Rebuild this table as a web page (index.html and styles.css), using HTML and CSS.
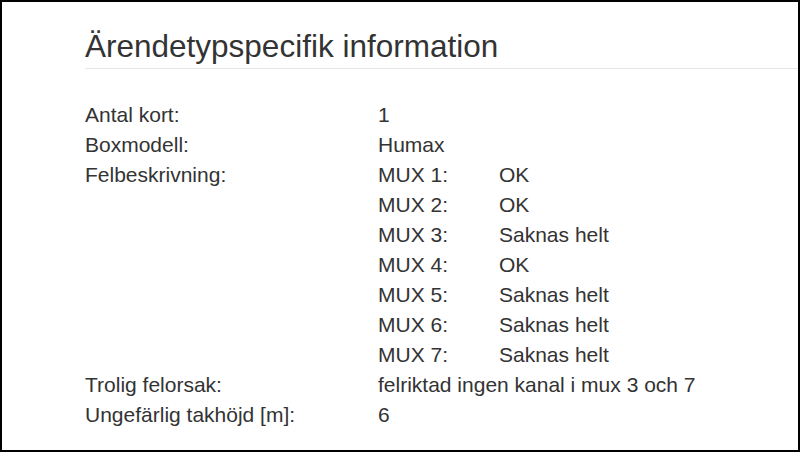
FILE: index.html
```html
<!DOCTYPE html>
<html lang="sv">
<head>
<meta charset="utf-8">
<link rel="stylesheet" href="styles.css">
</head>
<body>
<div class="frame">
  <div class="panel">
    <h3 class="title">Ärendetypspecifik information</h3>
    <dl class="info">
      <dt>Antal kort:</dt>
      <dd>1</dd>
      <dt>Boxmodell:</dt>
      <dd>Humax</dd>
      <dt>Felbeskrivning:</dt>
      <dd>
        <div class="mux">
          <span>MUX 1:</span><span>OK</span>
          <span>MUX 2:</span><span>OK</span>
          <span>MUX 3:</span><span>Saknas helt</span>
          <span>MUX 4:</span><span>OK</span>
          <span>MUX 5:</span><span>Saknas helt</span>
          <span>MUX 6:</span><span>Saknas helt</span>
          <span>MUX 7:</span><span>Saknas helt</span>
        </div>
      </dd>
      <dt>Trolig felorsak:</dt>
      <dd>felriktad ingen kanal i mux 3 och 7</dd>
      <dt>Ungefärlig takhöjd [m]:</dt>
      <dd>6</dd>
    </dl>
  </div>
</div>
</body>
</html>
```
FILE: styles.css
```css
* { box-sizing: border-box; }
html, body { margin: 0; padding: 0; }
body {
  font-family: "Liberation Sans", Arial, sans-serif;
  color: #333;
  background: #fff;
}
.frame {
  width: 800px;
  height: 452px;
  border: 2px solid #000;
  overflow: hidden;
  background: #fff;
}
.panel {
  padding-left: 83px;
}
.title {
  margin: 0;
  padding-top: 26px;
  padding-bottom: 4px;
  font-size: 31.5px;
  line-height: 36px;
  font-weight: normal;
  border-bottom: 1px solid #e5e5e5;
}
.info {
  margin: 31px 0 0 0;
  display: grid;
  grid-template-columns: 293px 1fr;
  font-size: 21px;
  line-height: 30px;
}
.info dt, .info dd {
  margin: 0;
}
.mux {
  display: grid;
  grid-template-columns: 121px 1fr;
}
```
